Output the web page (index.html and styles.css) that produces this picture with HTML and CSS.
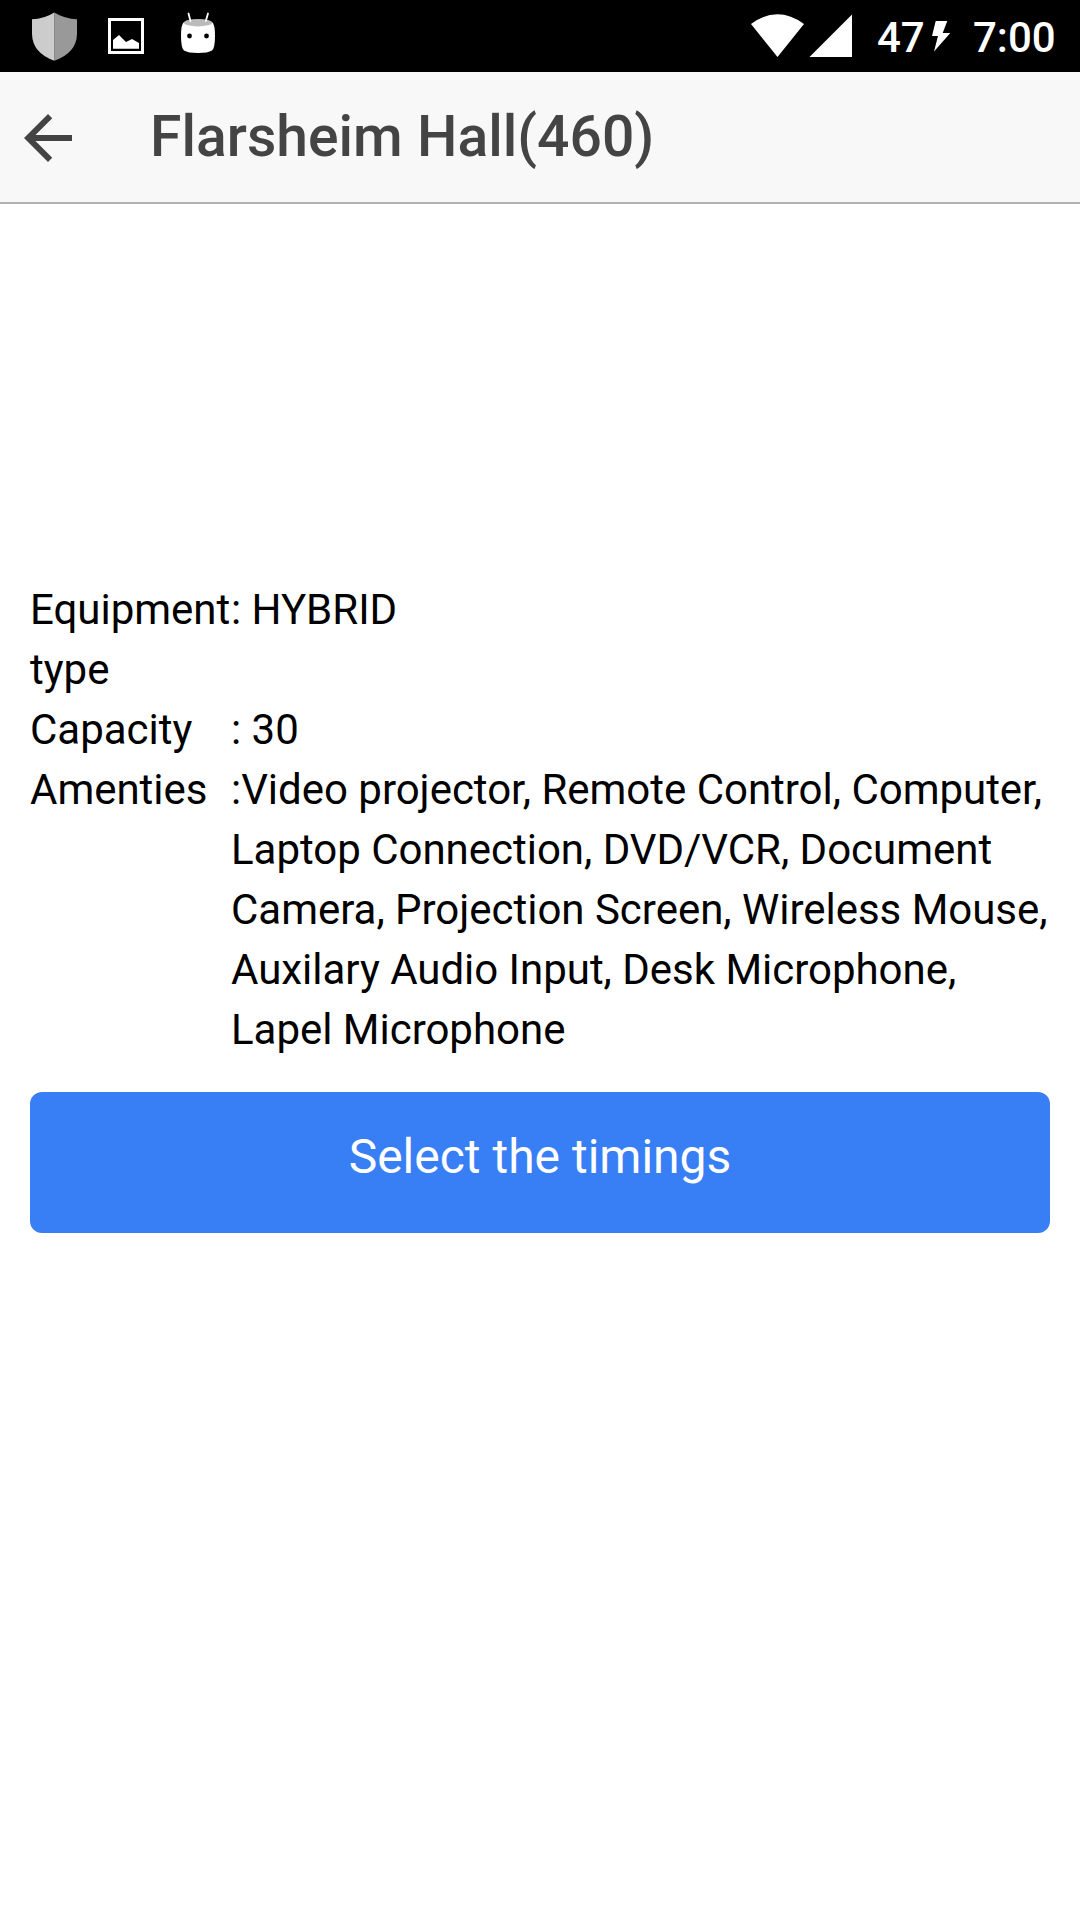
FILE: index.html
```html
<!DOCTYPE html>
<html lang="en">
<head><meta charset="utf-8"><title>Flarsheim Hall</title><link rel="stylesheet" href="styles.css"></head>
<body>
<div class="status">
<svg class="icons" width="240" height="72" viewBox="0 0 240 72">
<path d="M54.3 12.5Q65 19 77 19.3V34Q76.500 53 54.300 60.700Z" fill="#999"/>
<path d="M54.3 12.5Q44 19 32 19.3V34Q32.500 53 54.300 60.700Z" fill="#ccc"/>
<path fill="#fff" fill-rule="evenodd" d="M108 18h36v36h-36zM111 21v30h30V21z"/>
<path fill="#fff" d="M113 48.700V40L119 35L126 42L132 39L139 43V48.700Z"/>
<path fill="#fff" d="M184 22Q198 18 212 22Q215 24 215 36Q215 48 212 50.500Q208 53 198 53Q188 53 184 50.500Q181 48 181 36Q181 24 184 22Z"/>
<ellipse cx="198" cy="22.700" rx="14" ry="3.700" fill="#bbb"/>
<circle cx="189.500" cy="36" r="2.400"/><circle cx="206.500" cy="36" r="2.400"/>
<path stroke="#fff" stroke-width="1.800" stroke-linecap="round" d="M188.500 13.500L190.500 21M208 13.500L205.800 21"/>
</svg>
<svg class="signals" width="120" height="72" viewBox="740 0 120 72"><path fill="#fff" d="M751 24Q777.500 4.500 804 24L777.500 57ZM852 14.500V57H809.500Z"/></svg>
<span class="battery">47</span>
<svg class="bolt" width="22" height="72" viewBox="930 0 22 72"><path fill="#fff" d="M935.700 21H947.300L942.700 33H950.300L934 51.500L938 36H932Z"/></svg>
<span class="clock">7:00</span>
</div>
<header class="bar">
<svg class="back" width="48" height="48" viewBox="4 4 16 16"><path fill="#444" d="M20 11H7.830l5.590-5.590L12 4l-8 8 8 8 1.410-1.410L7.830 13H20z"/></svg>
<h1>Flarsheim Hall(460)</h1>
</header>
<main>
<dl class="details">
<dt>Equipment type</dt><dd>: HYBRID</dd>
<dt>Capacity</dt><dd>: 30</dd>
<dt>Amenties</dt><dd>:Video projector, Remote Control, Computer, Laptop Connection, DVD/VCR, Document Camera, Projection Screen, Wireless Mouse, Auxilary Audio Input, Desk Microphone, Lapel Microphone</dd>
</dl>
<button class="select">Select the timings</button>
</main>
</body>
</html>
```
FILE: styles.css
```css
body{margin:0;height:1920px;background:#fff;color:#000;font-family:Roboto,sans-serif;overflow:hidden}
.status{height:72px;background:#000;color:#fff;display:flex;align-items:center;font-size:42px;font-weight:500;line-height:72px}
.signals{margin-left:500px}
.battery{margin-left:17px;width:53px;padding-top:4px}
.clock{margin-left:21px;padding-top:4px;white-space:nowrap}
.bar{box-sizing:border-box;height:132px;background:#f8f8f8;border-bottom:2px solid #b2b2b2;display:flex;align-items:center;color:#444}
.back{margin-left:24px;margin-top:2px}
h1{margin:0 0 0 78px;font-size:57px;font-weight:500;line-height:130px;letter-spacing:.03px}
main{padding:376px 30px 0}
.details{margin:0;display:grid;grid-template-columns:201px 1fr;font-size:42px;line-height:60px;letter-spacing:-.02px}
dd{margin:0}
.select{display:block;width:100%;height:141px;margin:32px 0 0;padding:0 0 12px;border:0;border-radius:12px;background:#387ef5;color:#fff;font:400 48px Roboto,sans-serif}
```
